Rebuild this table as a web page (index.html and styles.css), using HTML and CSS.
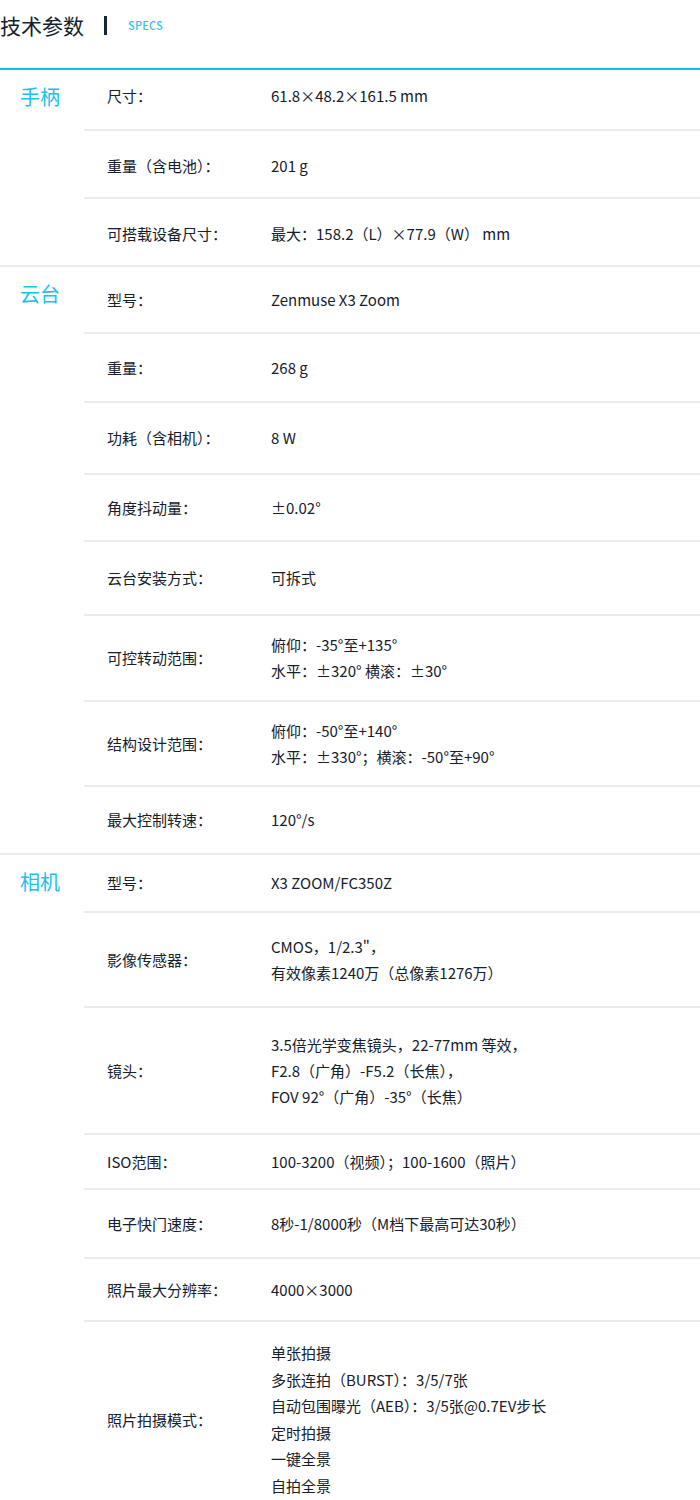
FILE: index.html
```html
<!DOCTYPE html>
<html lang="zh-CN">
<head>
    <meta charset="UTF-8">
    <meta name="viewport" content="width=device-width, initial-scale=1.0">
    <title>技术参数</title>
    <link rel="stylesheet" href="styles.css">
</head>
<body>

<header class="specs-head">
    <h2>技术参数</h2>
    <span class="bar"></span>
    <span class="sub">SPECS</span>
</header>

<div class="specs">
    <!-- 手柄 -->
    <section class="group">
        <div class="group-name">手柄</div>
        <div class="rows">
            <div class="row r61 up"><div class="key">尺寸：</div><div class="val">61.8×48.2×161.5 mm</div></div>
            <div class="row r68 down"><div class="key">重量（含电池）：</div><div class="val">201 g</div></div>
            <div class="row r66 down"><div class="key">可搭载设备尺寸：</div><div class="val">最大：158.2（L）×77.9（W） mm</div></div>
        </div>
    </section>

    <!-- 云台 -->
    <section class="group">
        <div class="group-name">云台</div>
        <div class="rows">
            <div class="row r67"><div class="key">型号：</div><div class="val">Zenmuse X3 Zoom</div></div>
            <div class="row r69"><div class="key">重量：</div><div class="val">268 g</div></div>
            <div class="row r72"><div class="key">功耗（含相机）：</div><div class="val">8 W</div></div>
            <div class="row r67"><div class="key">角度抖动量：</div><div class="val">±0.02°</div></div>
            <div class="row r74"><div class="key">云台安装方式：</div><div class="val">可拆式</div></div>
            <div class="row r86"><div class="key">可控转动范围：</div><div class="val">俯仰：-35°至+135°<br>水平：±320° 横滚：±30°</div></div>
            <div class="row r85"><div class="key">结构设计范围：</div><div class="val">俯仰：-50°至+140°<br>水平：±330°；横滚：-50°至+90°</div></div>
            <div class="row r66"><div class="key">最大控制转速：</div><div class="val">120°/s</div></div>
        </div>
    </section>

    <!-- 相机 -->
    <section class="group">
        <div class="group-name">相机</div>
        <div class="rows">
            <div class="row r58"><div class="key">型号：</div><div class="val">X3 ZOOM/FC350Z</div></div>
            <div class="row r95"><div class="key">影像传感器：</div><div class="val">CMOS，1/2.3"，<br>有效像素1240万（总像素1276万）</div></div>
            <div class="row r127"><div class="key">镜头：</div><div class="val">3.5倍光学变焦镜头，22-77mm 等效，<br>F2.8（广角）-F5.2（长焦），<br>FOV 92°（广角）-35°（长焦）</div></div>
            <div class="row r55"><div class="key">ISO范围：</div><div class="val">100-3200（视频）；100-1600（照片）</div></div>
            <div class="row r69"><div class="key">电子快门速度：</div><div class="val">8秒-1/8000秒（M档下最高可达30秒）</div></div>
            <div class="row r63"><div class="key">照片最大分辨率：</div><div class="val">4000×3000</div></div>
            <div class="row modes"><div class="key">照片拍摄模式：</div><div class="val">单张拍摄<br>多张连拍（BURST）：3/5/7张<br>自动包围曝光（AEB）：3/5张@0.7EV步长<br>定时拍摄<br>一键全景<br>自拍全景</div></div>
        </div>
    </section>
</div>

</body>
</html>
```

FILE: styles.css
```css
body {
    font-family: "Noto Sans CJK SC", "Noto Sans", sans-serif;
    background-color: #fff;
    color: #15202b;
    margin: 0;
    padding: 0;
}

.specs-head {
    display: flex;
    align-items: center;
    height: 50px;
    margin-bottom: 18px;
}

.specs-head h2 {
    margin: 0;
    font-size: 21px;
    font-weight: 400;
    color: #141f2b;
}

.specs-head .bar {
    width: 3px;
    height: 19px;
    background-color: #14263a;
    margin: 0 21px 0 20px;
}

.specs-head .sub {
    font-size: 11px;
    font-weight: 500;
    color: #2cc4f0;
    letter-spacing: 0.2px;
}

.specs {
    border-top: 2px solid #00c3f0;
}

.group {
    display: flex;
    border-bottom: 2px solid #ebebeb;
}

.group-name {
    width: 84px;
    box-sizing: border-box;
    padding: 14px 0 0 20px;
    font-size: 20px;
    line-height: 26px;
    color: #1cbfef;
}

.rows {
    flex: 1;
}

.row {
    display: flex;
    align-items: center;
    box-sizing: border-box;
    border-bottom: 2px solid #ebebeb;
    font-size: 15px;
    line-height: 26px;
}

.rows .row:last-child {
    border-bottom: none;
}

.row.up {
    padding-bottom: 8px;
}

.row.down {
    padding-top: 4px;
}

.key {
    width: 187px;
    padding-left: 23px;
    box-sizing: border-box;
    color: #15202b;
}

.val {
    flex: 1;
    color: #15202b;
}

/* row heights follow the source page */
.r55 { height: 55px; }
.r58 { height: 58px; }
.r61 { height: 61px; }
.r63 { height: 63px; }
.r66 { height: 66px; }
.r67 { height: 67px; }
.r68 { height: 68px; }
.r69 { height: 69px; }
.r72 { height: 72px; }
.r74 { height: 74px; }
.r85 { height: 85px; }
.r86 { height: 86px; }
.r95 { height: 95px; }
.r127 { height: 127px; }

.modes {
    padding: 18px 0 20px;
}

.modes .val {
    line-height: 26.6px;
}
```
